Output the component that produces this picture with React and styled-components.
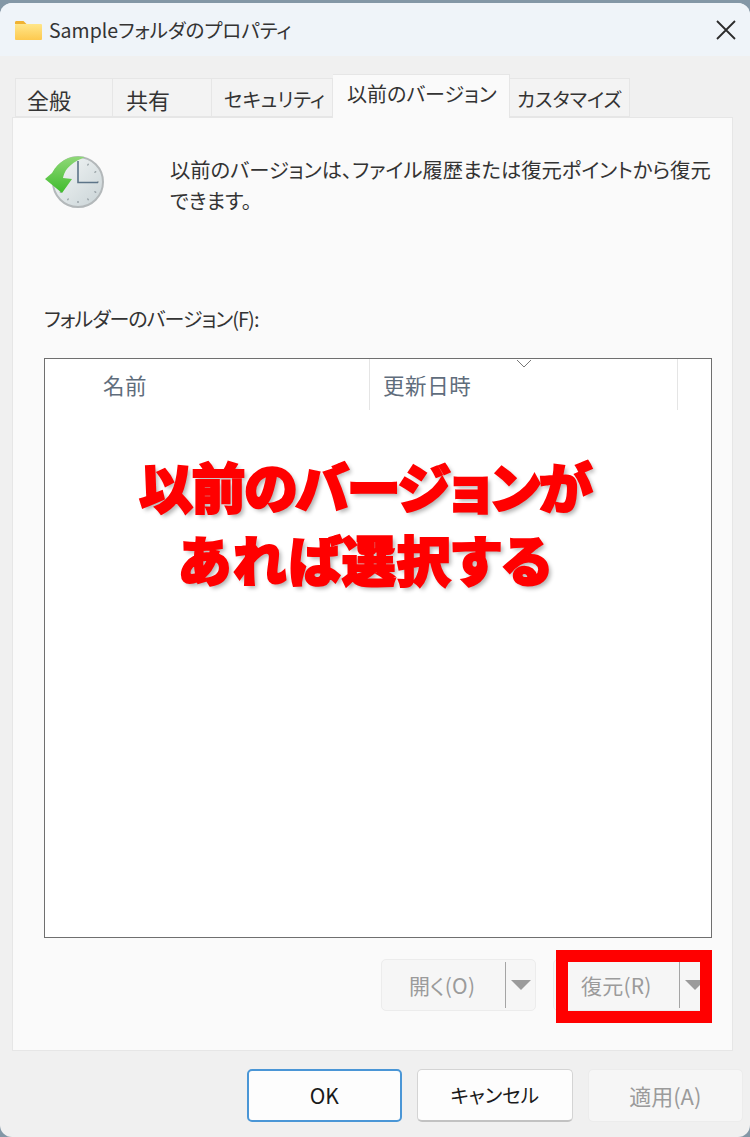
import React from "react";
import styled, { createGlobalStyle } from "styled-components";

const GlobalStyle = createGlobalStyle`
  html, body {
    margin: 0;
    padding: 0;
    background: #8397a6;
  }
  body {
    font-family: "Noto Sans CJK JP", "Noto Sans", sans-serif;
    font-feature-settings: "palt";
  }
  * {
    box-sizing: border-box;
  }
`;

const Page = styled.div`
  width: 750px;
  height: 1137px;
  padding-top: 3px;
  overflow: hidden;
`;

const Window = styled.div`
  height: 1134px;
  display: flex;
  flex-direction: column;
  background: #f0f0f0;
  border-radius: 12px;
  overflow: hidden;
`;

const TitleBar = styled.div`
  height: 53px;
  flex: none;
  display: flex;
  align-items: center;
  padding: 0 13px 0 14px;
  background: #eff4f9;
  color: #333;
  font-size: 19.5px;
`;

const Title = styled.span`
  margin-left: 7px;
  flex: 1;
`;

const TabStrip = styled.div`
  display: flex;
  align-items: flex-end;
  height: 43px;
  margin-top: 18px;
  padding-left: 15px;
  flex: none;
`;

const Tab = styled.div`
  position: relative;
  width: ${(p) => p.$width}px;
  height: ${(p) => (p.$active ? 44 : 39)}px;
  margin-bottom: ${(p) => (p.$active ? -1 : 0)}px;
  padding-top: ${(p) => (p.$active ? 4 : 5)}px;
  padding-left: ${(p) => p.$inset}px;
  font-size: ${(p) => p.$size}px;
  line-height: 30px;
  white-space: nowrap;
  color: #333;
  background: ${(p) => (p.$active ? "#fafafa" : "#f3f3f3")};
  border: 1px solid #e6e6e6;
  border-bottom: ${(p) => (p.$active ? "none" : "1px solid #e6e6e6")};
  border-left-width: ${(p) => (p.$first ? 1 : 0)}px;
  z-index: ${(p) => (p.$active ? 1 : 0)};
`;

const Panel = styled.div`
  height: 934px;
  margin: 0 17px 0 12px;
  padding: 0 20px 0 31px;
  flex: none;
  background: #fafafa;
  border: 1px solid #e6e6e6;
`;

const Intro = styled.div`
  display: flex;
  height: 181px;
  padding-top: 36px;
`;

const IconSlot = styled.div`
  width: 127px;
  flex: none;
  margin-top: 1px;
  margin-left: -1px;
`;

const IntroText = styled.p`
  margin: 0;
  font-size: 20.3px;
  line-height: 31px;
  color: #333;
  width: 548px;
`;

const FieldLabel = styled.div`
  height: 59px;
  font-size: 20px;
  line-height: 40px;
  letter-spacing: -0.95px;
  color: #333;
`;

const ListBox = styled.div`
  position: relative;
  height: 580px;
  background: #fff;
  border: 1.5px solid #6f6f6f;
`;

const ListHeader = styled.div`
  display: flex;
  height: 51px;
`;

const HeaderCell = styled.div`
  position: relative;
  width: ${(p) => p.$width}px;
  padding-left: ${(p) => p.$inset}px;
  border-right: 1px solid #e5e5e5;
  font-size: 21.5px;
  letter-spacing: 0.6px;
  line-height: 52px;
  color: #5f6d7c;
`;

const SortArrow = styled.svg`
  position: absolute;
  top: 0;
  left: 146px;
`;

const Annotation = styled.div`
  position: absolute;
  top: 90px;
  left: 0;
  width: 640px;
  text-align: center;
  font-size: 54px;
  font-weight: 900;
  line-height: 73px;
  color: #ff0000;
  -webkit-text-stroke: 2px #ff0000;
  text-shadow: 3px 3px 4px rgba(0, 0, 0, 0.3);
`;

const AnnotationLine = styled.div`
  letter-spacing: ${(p) => p.$spacing}px;
`;

const SplitRow = styled.div`
  display: flex;
  justify-content: flex-end;
  gap: 17px;
  margin-top: 21px;
  padding-right: 4px;
`;

const SplitButton = styled.div`
  position: relative;
  display: flex;
  align-items: center;
  width: 155px;
  height: 52px;
  padding-left: 27px;
  background: #f6f6f6;
  border: 1px solid #ececec;
  border-radius: 5px;
  color: #9b9b9b;
  font-size: 21px;
`;

const SplitLabel = styled.span`
  width: ${(p) => p.$width}px;
  letter-spacing: 0.2px;
`;

const SplitDivider = styled.span`
  width: 1px;
  height: 46px;
  background: #a5a5a5;
`;

const Caret = styled.span`
  margin-left: 5px;
  border-left: 10px solid transparent;
  border-right: 10px solid transparent;
  border-top: 10px solid #9b9b9b;
`;

const Highlight = styled.div`
  position: absolute;
  top: -10px;
  left: 2px;
  width: 156px;
  height: 73px;
  border: 12px solid #ff0000;
`;

const Footer = styled.div`
  display: flex;
  justify-content: flex-end;
  gap: 15px;
  padding: 18px 7px 0 0;
`;

const DialogButton = styled.div`
  width: 155.5px;
  height: 53px;
  display: flex;
  align-items: center;
  justify-content: center;
  padding-bottom: 2px;
  font-size: ${(p) => (p.$disabled ? 22 : p.$primary ? 21 : 19.6)}px;
  border-radius: 5px;
  color: ${(p) => (p.$disabled ? "#9b9b9b" : "#1a1a1a")};
  background: ${(p) => (p.$disabled ? "#f6f6f6" : "#fdfdfd")};
  border: ${(p) =>
    p.$primary
      ? "2px solid #4a96d6"
      : p.$disabled
        ? "1px solid #ececec"
        : "1px solid #d4d4d4"};
  border-bottom: ${(p) =>
    p.$primary
      ? "2px solid #4a96d6"
      : p.$disabled
        ? "1px solid #ececec"
        : "2px solid #c2c2c2"};
`;

const FolderIcon = () => (
  <svg width="28" height="22" viewBox="0 0 28 22">
    <defs>
      <linearGradient id="folderFill" x1="0" y1="0" x2="0" y2="1">
        <stop offset="0" stopColor="#ffe68a" />
        <stop offset="1" stopColor="#fdc94f" />
      </linearGradient>
    </defs>
    <path d="M1 3.5C1 2.5 1.6 2 2.5 2H9.5L12.5 5H1Z" fill="#f0b232" />
    <rect x="1" y="5" width="27" height="16" rx="1" fill="url(#folderFill)" />
  </svg>
);

const CloseIcon = () => (
  <svg width="22" height="22" viewBox="0 0 22 22">
    <path d="M2 2L20 20M20 2L2 20" stroke="#2b2b2b" strokeWidth="1.8" fill="none" />
  </svg>
);

const RestoreClockIcon = () => {
  const ticks = [30, 60, 90, 120, 150, 180, 210, 240, 270, 300, 330];
  return (
    <svg width="64" height="54" viewBox="0 0 64 54">
      <defs>
        <linearGradient id="clockFace" x1="0" y1="0" x2="1" y2="1">
          <stop offset="0" stopColor="#f5f8f8" />
          <stop offset="1" stopColor="#c9d3d6" />
        </linearGradient>
        <linearGradient id="arrowFill" x1="0" y1="0" x2="0" y2="1">
          <stop offset="0" stopColor="#8fd878" />
          <stop offset="1" stopColor="#3fbb2c" />
        </linearGradient>
      </defs>
      <circle cx="35" cy="27" r="25" fill="url(#clockFace)" stroke="#b3b8ba" strokeWidth="2" />
      {ticks.map((deg) => (
        <line
          key={deg}
          x1="35"
          y1="6"
          x2="35"
          y2="8"
          stroke="#8d979c"
          strokeWidth="1.2"
          transform={`rotate(${deg} 35 27)`}
        />
      ))}
      <path
        d="M42 2C30 0 17 3 9 18L2 24L19 38L29 24L20 23C21 17 25 9 40 3Z"
        fill="url(#arrowFill)"
      />
      <path d="M35 6V27.5H55" stroke="#5c7488" strokeWidth="1.6" fill="none" />
    </svg>
  );
};

const App = () => (
  <Page>
    <GlobalStyle />
    <Window>
      <TitleBar>
        <FolderIcon />
        <Title>Sampleフォルダのプロパティ</Title>
        <CloseIcon />
      </TitleBar>
      <TabStrip>
        <Tab $width={98} $first $inset={11} $size={22}>
          全般
        </Tab>
        <Tab $width={99} $inset={13} $size={22}>
          共有
        </Tab>
        <Tab $width={121} $inset={12} $size={19.5}>
          セキュリティ
        </Tab>
        <Tab $width={177} $inset={14} $size={20} $active>
          以前のバージョン
        </Tab>
        <Tab $width={120} $inset={7} $size={19.5}>
          カスタマイズ
        </Tab>
      </TabStrip>
      <Panel>
        <Intro>
          <IconSlot>
            <RestoreClockIcon />
          </IconSlot>
          <IntroText>
            以前のバージョンは、ファイル履歴または復元ポイントから復元できます。
          </IntroText>
        </Intro>
        <FieldLabel>フォルダーのバージョン(F):</FieldLabel>
        <ListBox>
          <ListHeader>
            <HeaderCell $width={325} $inset={58}>
              名前
            </HeaderCell>
            <HeaderCell $width={308} $inset={13}>
              更新日時
              <SortArrow width="16" height="9" viewBox="0 0 16 9">
                <path d="M1 1L8 8L15 1" stroke="#777" strokeWidth="1" fill="none" />
              </SortArrow>
            </HeaderCell>
          </ListHeader>
          <Annotation>
            <AnnotationLine $spacing={-1.5}>以前のバージョンが</AnnotationLine>
            <AnnotationLine $spacing={1}>あれば選択する</AnnotationLine>
          </Annotation>
        </ListBox>
        <SplitRow>
          <SplitButton>
            <SplitLabel $width={96}>開く(O)</SplitLabel>
            <SplitDivider />
            <Caret />
          </SplitButton>
          <SplitButton>
            <SplitLabel $width={98}>復元(R)</SplitLabel>
            <SplitDivider />
            <Caret />
            <Highlight />
          </SplitButton>
        </SplitRow>
      </Panel>
      <Footer>
        <DialogButton $primary>OK</DialogButton>
        <DialogButton>キャンセル</DialogButton>
        <DialogButton $disabled>適用(A)</DialogButton>
      </Footer>
    </Window>
  </Page>
);

export default App;
